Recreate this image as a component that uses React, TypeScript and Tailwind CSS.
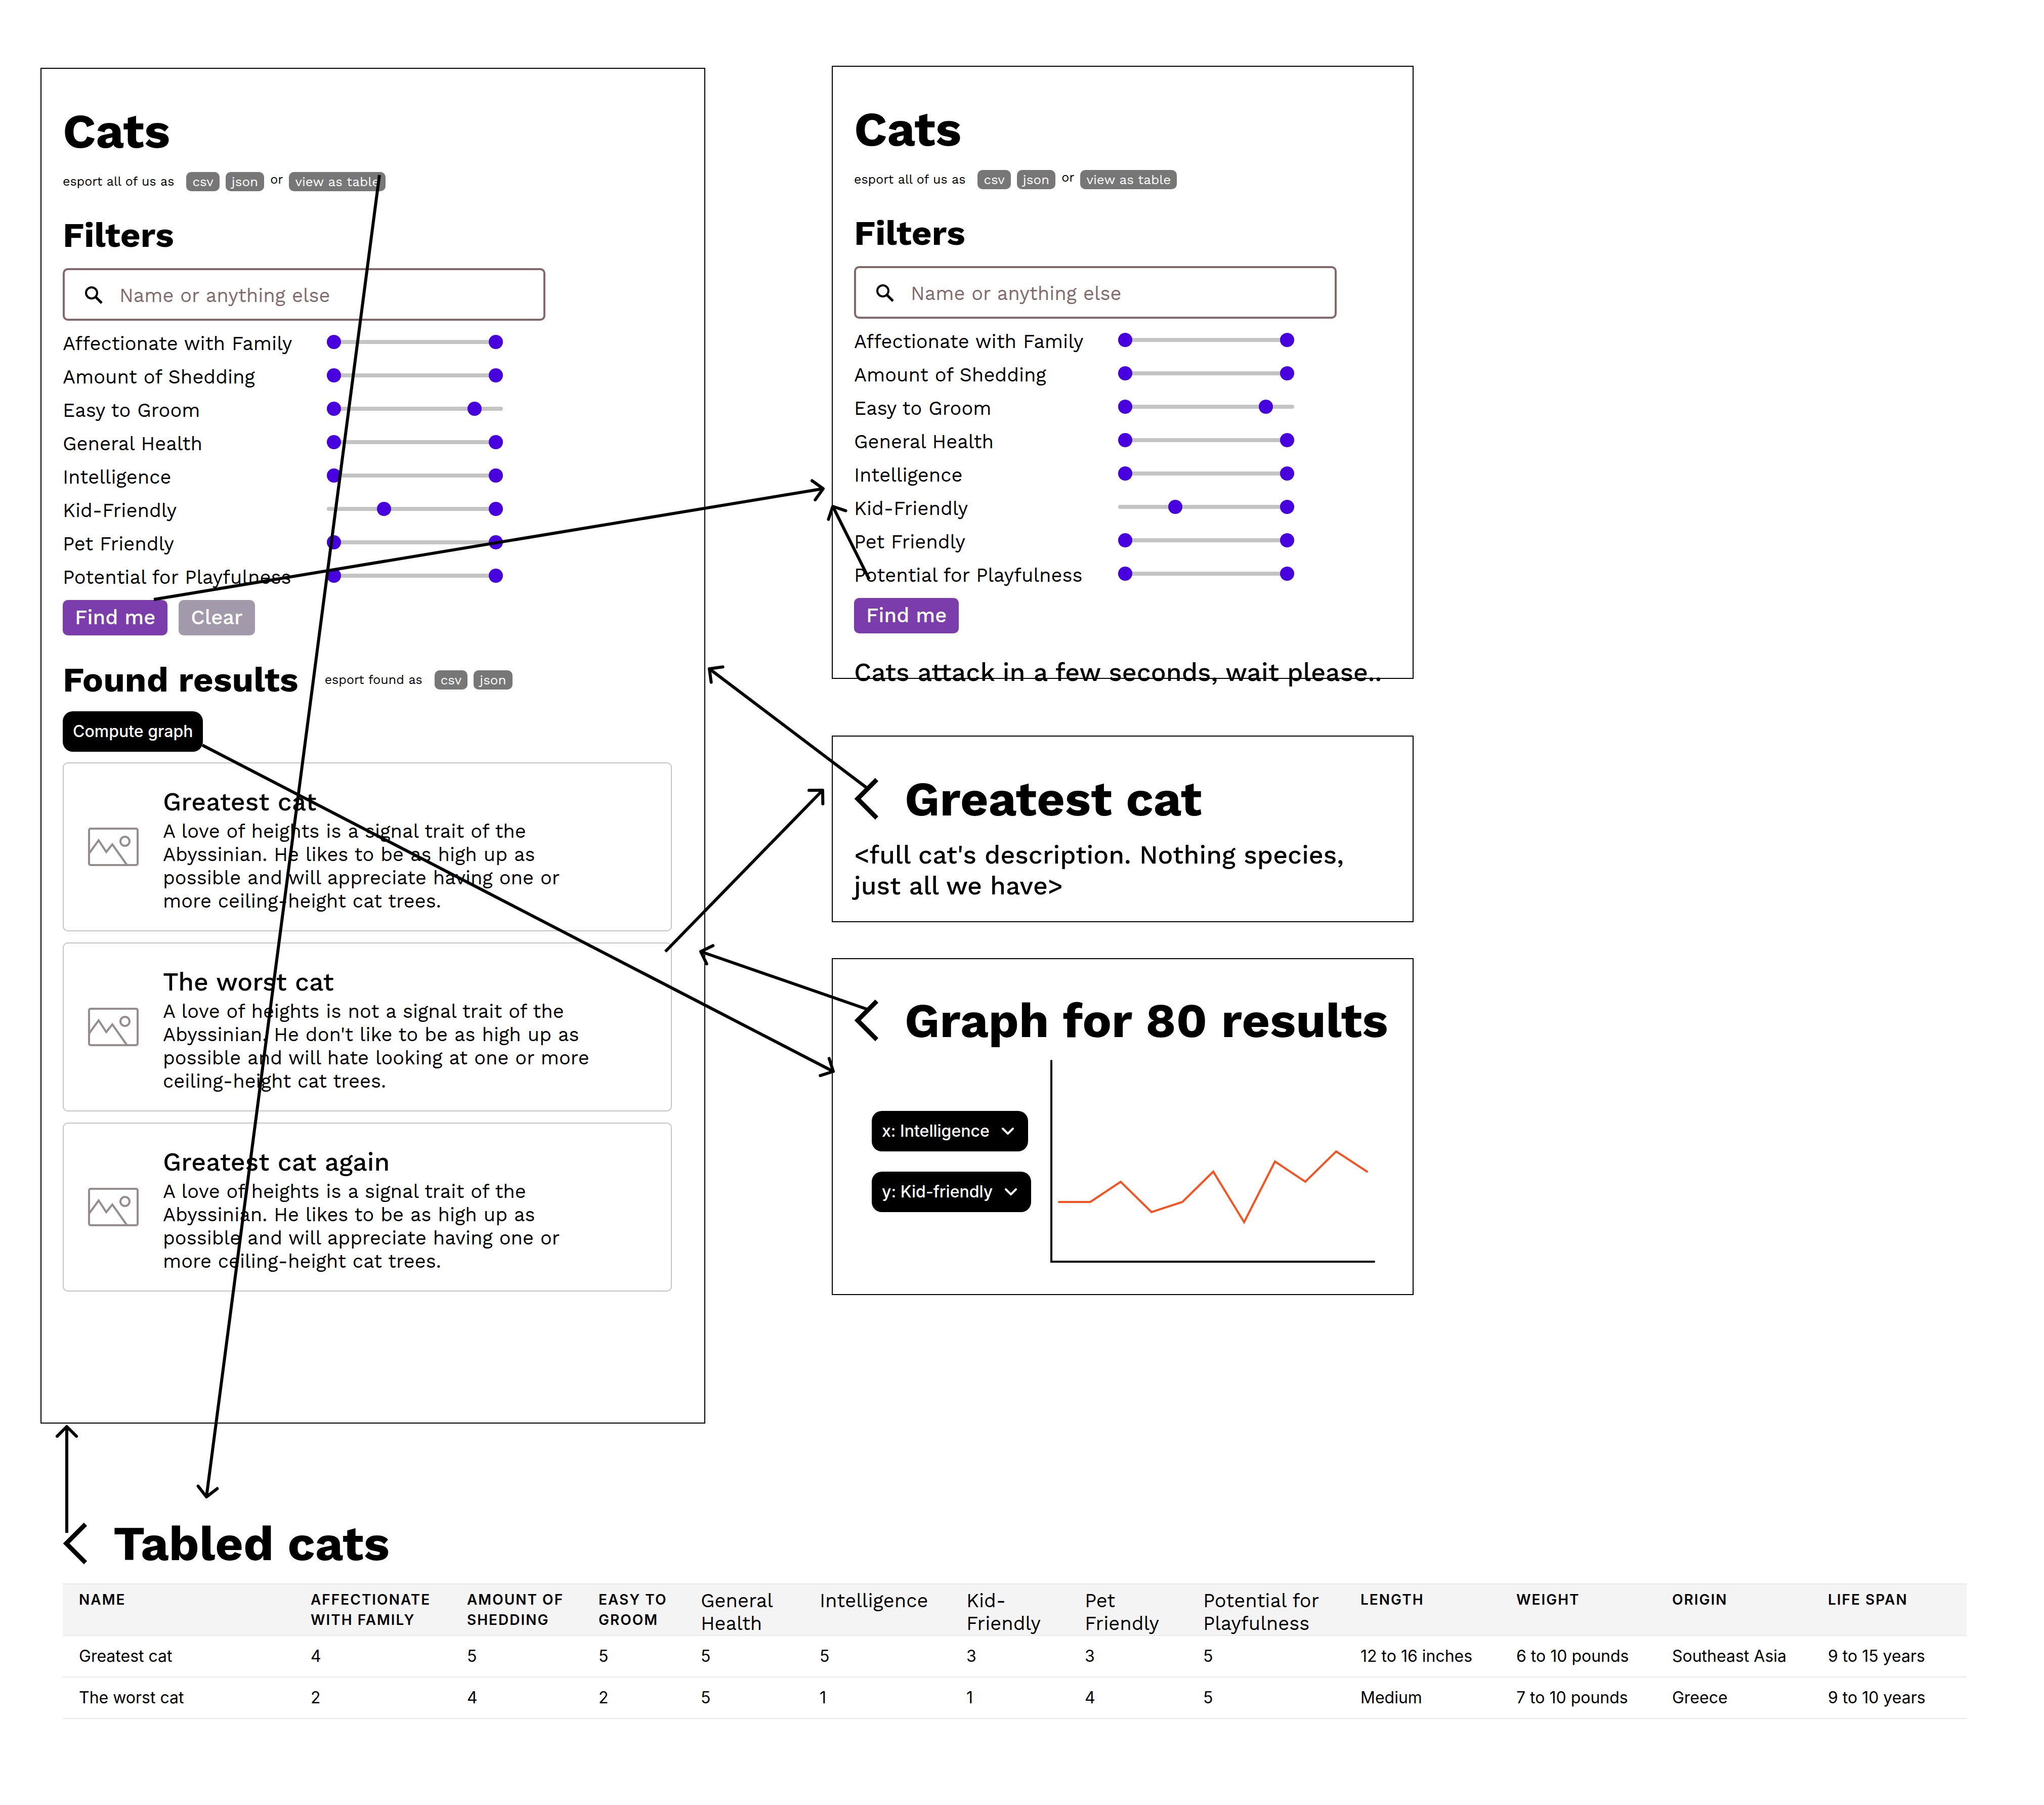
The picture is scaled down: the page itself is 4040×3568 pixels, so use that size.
import React from "react";

type Point = [number, number];

const TRAITS: { label: string; low: number; high: number }[] = [
  { label: "Affectionate with Family", low: 0, high: 100 },
  { label: "Amount of Shedding", low: 0, high: 100 },
  { label: "Easy to Groom", low: 0, high: 87 },
  { label: "General Health", low: 0, high: 100 },
  { label: "Intelligence", low: 0, high: 100 },
  { label: "Kid-Friendly", low: 31, high: 100 },
  { label: "Pet Friendly", low: 0, high: 100 },
  { label: "Potential for Playfulness", low: 0, high: 100 },
];

const CATS = [
  {
    name: "Greatest cat",
    text: "A love of heights is a signal trait of the Abyssinian. He likes to be as high up as possible and will appreciate having one or more ceiling-height cat trees.",
  },
  {
    name: "The worst cat",
    text: "A love of heights is not a signal trait of the Abyssinian. He don't like to be as high up as possible and will hate looking at one or more ceiling-height cat trees.",
  },
  {
    name: "Greatest cat again",
    text: "A love of heights is a signal trait of the Abyssinian. He likes to be as high up as possible and will appreciate having one or more ceiling-height cat trees.",
  },
];

const COLUMNS: { title: string; share: number; caps: boolean }[] = [
  { title: "Name", share: 458, caps: true },
  { title: "Affectionate with Family", share: 309, caps: true },
  { title: "Amount of Shedding", share: 260, caps: true },
  { title: "Easy to Groom", share: 202, caps: true },
  { title: "General Health", share: 235, caps: false },
  { title: "Intelligence", share: 290, caps: false },
  { title: "Kid-Friendly", share: 234, caps: false },
  { title: "Pet Friendly", share: 234, caps: false },
  { title: "Potential for Playfulness", share: 311, caps: false },
  { title: "Length", share: 308, caps: true },
  { title: "Weight", share: 308, caps: true },
  { title: "Origin", share: 308, caps: true },
  { title: "Life span", share: 306, caps: true },
];
const TOTAL_SHARE = COLUMNS.reduce((sum, c) => sum + c.share, 0);

const ROWS = [
  ["Greatest cat", "4", "5", "5", "5", "5", "3", "3", "5", "12 to 16 inches", "6 to 10 pounds", "Southeast Asia", "9 to 15 years"],
  ["The worst cat", "2", "4", "2", "5", "1", "1", "4", "5", "Medium", "7 to 10 pounds", "Greece", "9 to 10 years"],
];

const ARROWS: { from: Point; to: Point }[] = [
  { from: [750, 346], to: [408, 2959] },
  { from: [304, 1185], to: [1627, 966] },
  { from: [1718, 1145], to: [1646, 1001] },
  { from: [1714, 1558], to: [1402, 1322] },
  { from: [1315, 1881], to: [1626, 1562] },
  { from: [400, 1473], to: [1647, 2118] },
  { from: [1714, 1995], to: [1385, 1881] },
  { from: [132, 3030], to: [132, 2820] },
];

function Arrow({ from, to }: { from: Point; to: Point }) {
  const angle = Math.atan2(to[1] - from[1], to[0] - from[0]);
  const arm = (turn: number) =>
    `${to[0] - 27 * Math.cos(angle + turn)} ${to[1] - 27 * Math.sin(angle + turn)}`;
  return (
    <g>
      <path d={`M${from[0]} ${from[1]}L${to[0]} ${to[1]}`} />
      <path strokeLinecap="round" d={`M${arm(Math.PI / 4)}L${to[0]} ${to[1]}L${arm(-Math.PI / 4)}`} />
    </g>
  );
}

function Pill({ children }: { children: string }) {
  return (
    <button type="button" className="h-[38px] rounded-[10px] bg-[#777777] px-3 text-[26px] leading-[38px] text-white">
      {children}
    </button>
  );
}

function ImageIcon() {
  return (
    <svg viewBox="0 0 100 76" className="h-[76px] w-[100px] shrink-0" fill="none" stroke="#968b8d" strokeWidth="4">
      <rect x="2" y="2" width="96" height="72" rx="3" />
      <path d="M2 51 21 25 36 48 48 33 77 74" />
      <circle cx="73" cy="27" r="9" />
    </svg>
  );
}

function RangeRow({ label, low, high }: { label: string; low: number; high: number }) {
  const thumb =
    "pointer-events-none absolute inset-0 h-7 w-full appearance-none bg-transparent [&::-webkit-slider-runnable-track]:bg-transparent [&::-webkit-slider-thumb]:pointer-events-auto [&::-webkit-slider-thumb]:size-7 [&::-webkit-slider-thumb]:appearance-none [&::-webkit-slider-thumb]:rounded-full [&::-webkit-slider-thumb]:bg-[#4700dd]";
  return (
    <div className="flex h-[66px] items-center">
      <span className="w-[522px] pt-1.5 text-[38px] leading-[46px]">{label}</span>
      <div className="relative flex h-7 w-[348px] items-center">
        <div className="h-2 w-full rounded bg-[#c4c4c4]" />
        <input type="range" aria-label={`${label} minimum`} defaultValue={low} className={thumb} />
        <input type="range" aria-label={`${label} maximum`} defaultValue={high} className={thumb} />
      </div>
    </div>
  );
}

function SearchPanel({ id, clearable }: { id: string; clearable: boolean }) {
  return (
    <>
      <h1 className="text-[96px] leading-[112px] font-bold">Cats</h1>
      <div className="mt-[25px] flex items-center gap-3 text-[25px] leading-[38px]">
        <span className="mr-3">esport all of us as</span>
        <Pill>csv</Pill>
        <Pill>json</Pill>
        <span className="self-start leading-[30px]">or</span>
        <Pill>view as table</Pill>
      </div>
      <h2 className="mt-[45px] text-[69px] leading-[84px] font-bold">Filters</h2>
      <label
        htmlFor={id}
        className="mt-[23px] flex h-[104px] w-[954px] items-center gap-8 rounded-[10px] border-4 border-[#826a6c] px-10 pt-1"
      >
        <svg viewBox="0 0 36 36" className="size-9 shrink-0" fill="none" stroke="black" strokeWidth="4">
          <circle cx="13" cy="13" r="11" />
          <path d="M21 21 33 33" strokeWidth="5" />
        </svg>
        <input
          id={id}
          type="text"
          placeholder="Name or anything else"
          className="w-full bg-transparent text-[38px] leading-[46px] outline-none placeholder:text-[#826a6c]"
        />
      </label>
      <div className="mt-[9px]">
        {TRAITS.map((t) => (
          <RangeRow key={t.label} {...t} />
        ))}
      </div>
      <div className="mt-[15px] flex gap-[22px] text-[40px] leading-[70px] font-medium text-white">
        <button type="button" className="rounded-[10px] bg-[#7b3dac] px-6">
          Find me
        </button>
        {clearable && (
          <button type="button" className="rounded-[10px] bg-[#a29aaa] px-6">
            Clear
          </button>
        )}
      </div>
    </>
  );
}

function BackTitle({ children }: { children: string }) {
  return (
    <div className="flex items-center gap-[52px]">
      <button type="button" aria-label="Back" className="w-12 shrink-0">
        <svg viewBox="0 0 48 82" className="h-[82px] w-12" fill="none" stroke="black" strokeWidth="9">
          <path d="M45 3 7 41 45 79" />
        </svg>
      </button>
      <h1 className="text-[96px] leading-[112px] font-bold whitespace-nowrap">{children}</h1>
    </div>
  );
}

function AxisSelect({ label, value }: { label: string; value: string }) {
  return (
    <div className="relative w-fit">
      <select
        aria-label={label}
        className="field-sizing-content h-20 appearance-none rounded-[20px] bg-black pr-[76px] pl-5 text-[32px] font-medium text-white"
      >
        <option>{value}</option>
      </select>
      <svg
        viewBox="0 0 24 14"
        className="pointer-events-none absolute top-[33px] right-7 h-[14px] w-6"
        fill="none"
        stroke="white"
        strokeWidth="4"
        strokeLinecap="round"
      >
        <path d="M2 2 12 12 22 2" />
      </svg>
    </div>
  );
}

export default function App() {
  return (
    <div className="relative min-h-screen w-full bg-white pt-[130px] font-['Work_Sans',Inter,sans-serif] text-black">
      <main className="grid grid-cols-[1314fr_1150fr_996fr] items-start gap-x-[250px] pl-20">
        <section className="mt-1 border-2 border-black pt-[67px] pr-16 pb-[259px] pl-[42px]">
          <SearchPanel id="search" clearable />
          <div className="mt-[46px] flex items-end gap-3">
            <h2 className="mr-10 text-[69px] leading-[84px] font-bold">Found results</h2>
            <div className="flex gap-3 pb-[23px] text-[25px] leading-[38px]">
              <span className="mr-3">esport found as</span>
              <Pill>csv</Pill>
              <Pill>json</Pill>
            </div>
          </div>
          <button
            type="button"
            className="mt-5 block h-20 rounded-[20px] bg-black px-5 font-[Inter,sans-serif] text-[32px] font-medium text-white"
          >
            Compute graph
          </button>
          <div className="mt-[21px] flex flex-col gap-[22px]">
            {CATS.map((cat) => (
              <article
                key={cat.name}
                className="flex items-center gap-12 rounded-[10px] border-2 border-[#c4c4c4] pl-12"
              >
                <ImageIcon />
                <div className="w-[860px] pt-[45px] pb-[35px]">
                  <h3 className="text-[50px] leading-[61px] font-medium">{cat.name}</h3>
                  <p className="mt-[5px] text-[38px] leading-[46px]">{cat.text}</p>
                </div>
              </article>
            ))}
          </div>
        </section>

        <div className="flex flex-col">
          <section className="border-2 border-black pt-[67px] pl-[42px]">
            <SearchPanel id="search-loading" clearable={false} />
            <p className="mt-[46px] -mb-[19px] text-[50px] leading-[61px] font-medium whitespace-nowrap">
              Cats attack in a few seconds, wait please..
            </p>
          </section>

          <section className="mt-28 border-2 border-black pt-[67px] pb-[40px] pl-[42px]">
            <BackTitle>Greatest cat</BackTitle>
            <p className="mt-6 w-[1020px] text-[50px] leading-[61px] font-medium">
              {"<full cat's description. Nothing species, just all we have>"}
            </p>
          </section>

          <section className="mt-[71px] border-2 border-black pt-[65px] pb-[61px] pl-[42px]">
            <BackTitle>Graph for 80 results</BackTitle>
            <div className="mt-[22px] flex pl-[35px]">
              <div className="flex w-[353px] flex-col gap-10 pt-[101px] font-[Inter,sans-serif]">
                <AxisSelect label="X axis" value="x: Intelligence" />
                <AxisSelect label="Y axis" value="y: Kid-friendly" />
              </div>
              <svg viewBox="0 0 642 402" className="h-[402px] w-[642px]" fill="none" strokeWidth="4">
                <path d="M2 2V399H640" stroke="black" strokeLinecap="round" />
                <path
                  d="M17 281H79L139 241 200 301 261 281 322 221 383 321 444 201 504 241 565 181 626 221"
                  stroke="#f9521e"
                  strokeLinecap="round"
                />
              </svg>
            </div>
          </section>
        </div>
      </main>

      <section className="mt-[181px] pr-[153px] pb-[170px] pl-[124px]">
        <BackTitle>Tabled cats</BackTitle>
        <table className="mt-[23px] w-full table-fixed border-collapse text-left">
          <colgroup>
            {COLUMNS.map((c) => (
              <col key={c.title} style={{ width: `${(c.share / TOTAL_SHARE) * 100}%` }} />
            ))}
          </colgroup>
          <thead>
            <tr className="h-[102px] border-y-2 border-[#eaeaea] bg-[#f4f4f4]">
              {COLUMNS.map((c) => (
                <th
                  key={c.title}
                  scope="col"
                  className={
                    c.caps
                      ? "pt-[10px] pl-8 align-top font-[Inter,sans-serif] text-[28px] leading-10 font-semibold tracking-[2px] uppercase"
                      : "pt-[10px] pl-8 align-top text-[38px] leading-[45px] font-normal"
                  }
                >
                  {c.title}
                </th>
              ))}
            </tr>
          </thead>
          <tbody className="font-[Inter,sans-serif] text-[32px] leading-10">
            {ROWS.map((row) => (
              <tr key={row[0]} className="h-[82px] border-b-2 border-[#eaeaea]">
                {row.map((cell, i) => (
                  <td key={i} className="pl-8 whitespace-nowrap">
                    {cell}
                  </td>
                ))}
              </tr>
            ))}
          </tbody>
        </table>
      </section>

      <svg
        viewBox="0 0 4040 3568"
        className="pointer-events-none absolute top-0 left-0 w-full"
        fill="none"
        stroke="black"
        strokeWidth="6"
        strokeLinejoin="round"
      >
        {ARROWS.map((a, i) => (
          <Arrow key={i} {...a} />
        ))}
      </svg>
    </div>
  );
}
